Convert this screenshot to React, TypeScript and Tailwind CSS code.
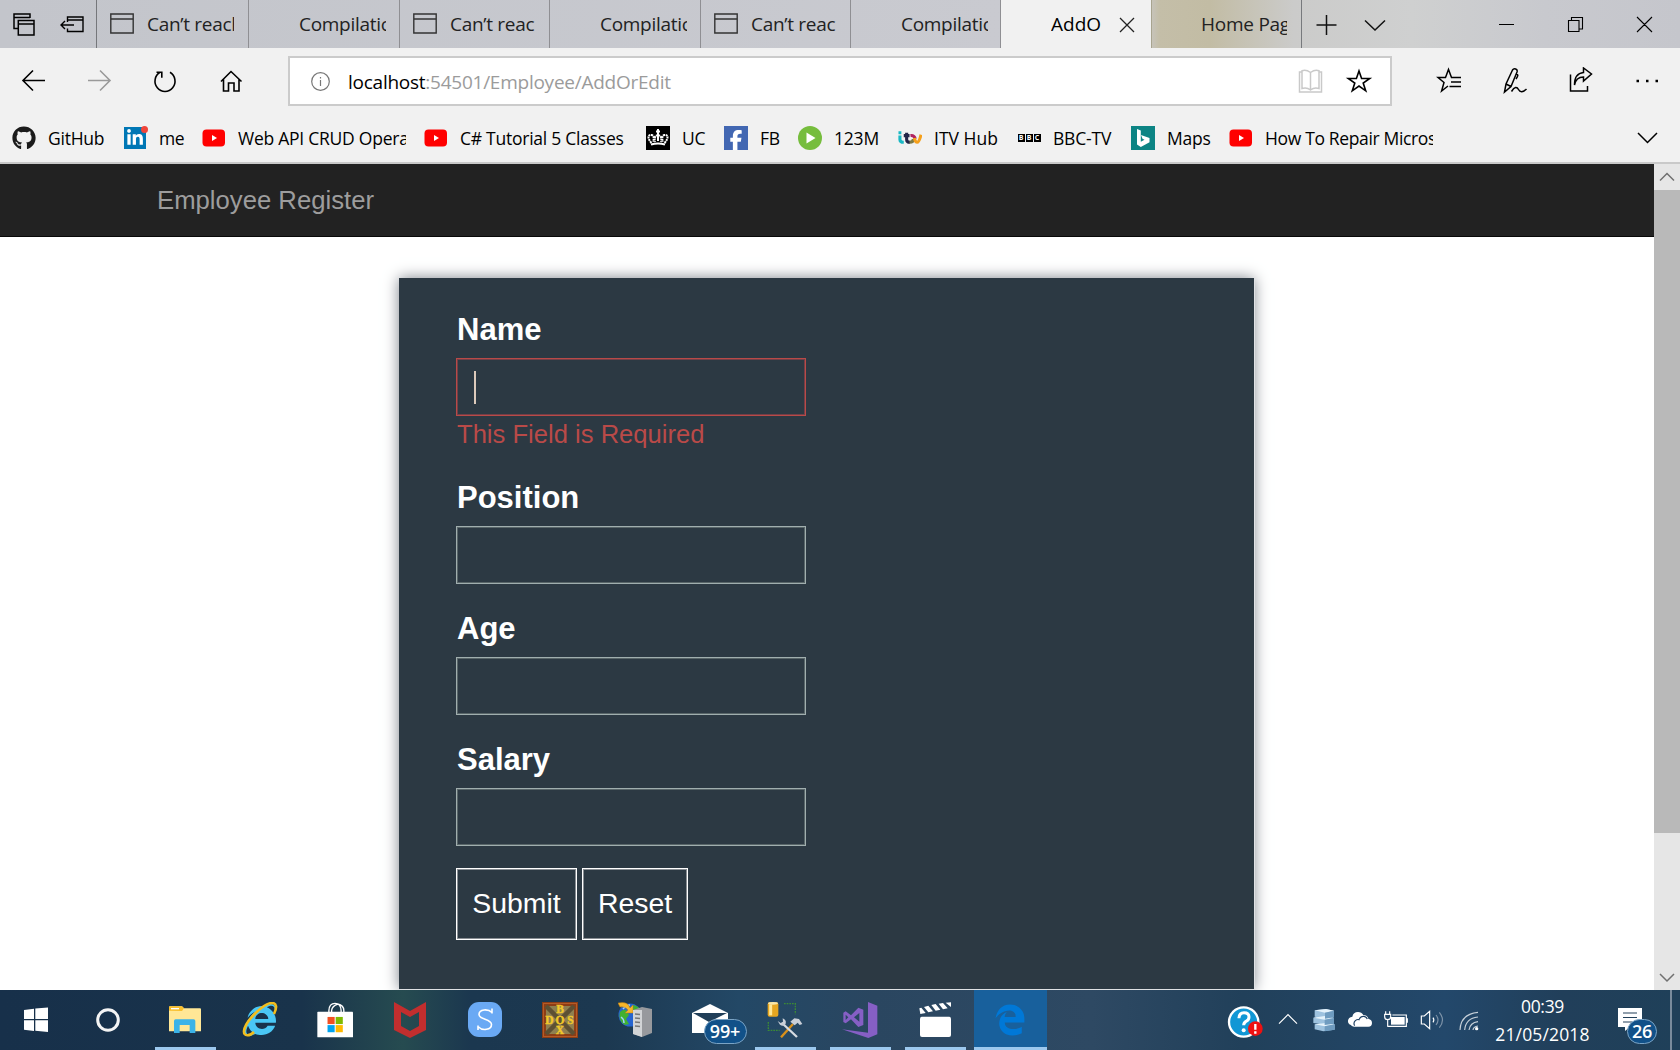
import type { ReactNode } from "react";
import { FaGithub, FaLinkedinIn, FaFacebookF, FaInternetExplorer, FaEdgeLegacy } from "react-icons/fa6";

const UI = "font-['Open_Sans','Noto_Sans',sans-serif]";

/* ---------- tab strip ---------- */

function WindowIcon() {
  return (
    <svg width="24" height="21" viewBox="0 0 24 21" fill="none" stroke="#333" strokeWidth="1.4" className="mb-[2px] shrink-0">
      <path d="M.8 1h22.400v19H.8zM.8 6h22.400" />
    </svg>
  );
}

function Tab({ title, icon, width }: { title: string; icon?: boolean; width: string }) {
  return (
    <div className={`flex h-12 shrink-0 items-center border-r border-[#8f8f93] ${width} pl-[13px] text-[#222]`}>
      <div className="w-[24px]">{icon && <WindowIcon />}</div>
      <div className="ml-[13px] w-[87px] overflow-hidden text-[19px] leading-[32px] tracking-[-0.3px] whitespace-nowrap">{title}</div>
    </div>
  );
}

function Tabs() {
  return (
    <div className="flex h-12 bg-[linear-gradient(90deg,#c3c5cb_0%,#c9cad0_60%,#c9cad0_68%,#c4bea8_69%,#c2bca4_72%,#cbcbca_77%,#cfd0d0_84%,#c8c9ce_92%,#c5c6cc_100%)]">
      <div className="flex w-[97px] items-center border-r border-[#75777b] pl-[13px]">
        <svg width="22" height="23" viewBox="0 0 22 23" fill="none" stroke="#000" strokeWidth="1.5">
          <path d="M5 15.5H1V1h16v4M1 4.500h16M5.300 7.500h15.700v14.500H5.300zM5.300 11h15.700" />
        </svg>
        <svg width="24" height="17" viewBox="0 0 24 17" fill="none" stroke="#000" strokeWidth="1.4" className="ml-[25px]">
          <path d="M7.500 6V1h15.500v14.500H7.500v-3M7.500 4H23M14 9H1M5 5L1 9l4 4" />
        </svg>
      </div>
      <Tab title="Can’t reach" icon width="w-[152px]" />
      <Tab title="Compilatic" width="w-[151px]" />
      <Tab title="Can’t reac" icon width="w-[150px]" />
      <Tab title="Compilatic" width="w-[151px]" />
      <Tab title="Can’t reac" icon width="w-[150px]" />
      <Tab title="Compilatic" width="w-[150px]" />
      <div className="flex h-12 w-[150px] shrink-0 items-center bg-[#f1f1f1] pl-[50px] text-black">
        <span className="w-[53px] overflow-hidden text-[19px] tracking-[0px]">AddO</span>
        <svg width="16" height="16" viewBox="0 0 16 16" stroke="#222" strokeWidth="1.300" className="mt-[2px] ml-[15px]">
          <path d="M1 1l14 14M15 1L1 15" />
        </svg>
      </div>
      <div className="flex h-12 w-[151px] shrink-0 items-center border-r border-l border-r-[#77797d] border-l-[#a8a48f] pl-[49px] text-[#222]">
        <span className="w-[86px] overflow-hidden text-[19px] leading-[32px] tracking-[-0.25px] whitespace-nowrap">Home Pag</span>
      </div>
      <svg width="72" height="48" viewBox="0 0 72 48" fill="none" stroke="#111" strokeWidth="1.500" className="ml-[14px]">
        <path d="M.5 25h20M10.500 15v20M49 20.500l10 9.500 10-9.500" />
      </svg>
      <svg width="160" height="48" viewBox="0 0 160 48" fill="none" stroke="#000" strokeWidth="1.100" className="ml-[110px]">
        <path d="M1 24.500h15M70.500 20.500h10.500v11h-10.500zM73.500 20.500v-3h11v11.500h-3.500M139 17l15 15M154 17l-15 15" />
      </svg>
    </div>
  );
}

/* ---------- address row ---------- */

function Toolbar() {
  return (
    <div className="flex h-[66px] items-center">
      <svg width="230" height="26" viewBox="0 0 230 26" fill="none" stroke="#000" strokeWidth="1.600" className="ml-[20px]">
        <path d="M25 12.500H3M13 2.500l-10 10 10 10" />
        <path d="M68 12.500h22M80 2.500l10 10-10 10" stroke="#9a9a9a" />
        <path d="M140 4.300A10 10.300 0 1 0 150 4.300M136.500 4.300h5.300v5.500" />
        <path d="M201 13.500L211 3.500 221.500 13.500M203.500 11.500V23h5v-8h5.500v8h5V11.500" />
      </svg>
      <div className="ml-[38px] flex h-[50px] w-[1104px] items-center border-2 border-[#cbcbcb] bg-white pl-[21px]">
        <svg width="19" height="19" viewBox="0 0 19 19" fill="none" stroke="#777" strokeWidth="1.200">
          <circle cx="9.500" cy="9.500" r="8.800" />
          <path d="M9.500 8v6M9.500 5v1.600" />
        </svg>
        <div className="mt-[2px] ml-[18px] w-[950px] text-[19px] tracking-[-0.25px] whitespace-nowrap text-[#9b9b9b]">
          <span className="text-black">localhost</span>:54501/Employee/AddOrEdit
        </div>
        <svg width="76" height="26" viewBox="0 0 76 26" fill="none" className="shrink-0">
          <path d="M12.500 4.500C9 2 6 2 4 2.800V20.500c3-1 6-.5 8.500 1.500 2.500-2 5.500-2.500 8.500-1.500V2.800c-2-.8-5-.8-8.500 1.700zM12.500 4.500V22M4 4H1.500v20h22V4H21" stroke="#c9c9c9" strokeWidth="1.500" />
          <path d="M60.500 4l2.600 7.500h8.100l-6.500 4.600 2.500 7.700-6.700-4.700-6.700 4.700 2.500-7.700-6.500-4.600h8.100z" transform="translate(.5 -1)" stroke="#000" strokeWidth="1.600" />
        </svg>
      </div>
      <svg width="228" height="28" viewBox="0 0 228 28" fill="none" stroke="#000" strokeWidth="1.500" className="ml-[44px]">
        <path d="M17.500 10.500h-2L12.500 2.500 9.500 10.500H2l6 5-2.400 8.500 6.400-5M15.500 10.500H25M15 15h10M13.500 19.500h11.500" />
        <path d="M68.500 25l1.500-8 6.500-14c1.500-2.500 5.500-1 4.500 2L75 19.500zM70 17l5 2.500M80.500 7c2 .5 1.500 2-.5 5M75.500 24.500c3-5 5.500-5 7-2s4.500 3 8-.5" />
        <path d="M134 7.500V24h17v-5M138 18c1-5.500 4-8 9-8V14l8-7-8-6v4.500c-6 .5-9 5-9 12.500z" transform="translate(.5 0)" />
        <path d="M200.500 14h2.500M210 14h2.500M219.500 14h2.500" strokeWidth="2.500" />
      </svg>
    </div>
  );
}

/* ---------- favourites bar ---------- */

function YouTube() {
  return (
    <svg width="24" height="18" viewBox="0 0 24 18">
      <rect x=".5" y=".5" width="22.500" height="17" rx="4" fill="#f00" />
      <path d="M10 6v6l5-3z" fill="#fff" />
    </svg>
  );
}

function Crown() {
  return (
    <svg width="24" height="24" viewBox="0 0 24 24" className="bg-black">
      <g fill="none" stroke="#fff" strokeWidth="2">
        <path d="M5.500 17C1 12 2 8.500 5.500 9c3 .5 2 4 2 7M18.500 17c4.500-5 3.500-8.500 0-8-3 .5-2 4-2 7M12 9c-4 1-3.500 4-3 7M12 9c4 1 3.500 4 3 7" strokeDasharray="2 .6" />
        <path d="M12 3v12M10 5.500h4" />
        <path d="M5 18.500q7-2 14 0" strokeWidth="2.200" />
      </g>
    </svg>
  );
}

function Fav({ label, width, clip, children, tracking = "tracking-[-0.35px]" }: { label: string; width: string; clip?: boolean; children: ReactNode; tracking?: string }) {
  return (
    <div className={`flex shrink-0 items-center ${width}`}>
      <div className="flex h-6 w-6 shrink-0 items-center justify-center">{children}</div>
      <span className={`ml-3 text-[17.500px] leading-[26px] whitespace-nowrap ${clip ? "w-[168px] overflow-hidden" : ""} ${tracking}`}>{label}</span>
    </div>
  );
}

function Favourites() {
  return (
    <div className="flex h-[48px] items-center pl-3 text-black">
      <Fav label="GitHub" width="w-[111px]" tracking="tracking-[-0.25px]"><FaGithub size={24} color="#1b1b1b" /></Fav>
      <Fav label="me" width="w-[79px]">
        <div className="relative flex h-[22px] w-[22px] items-center justify-center bg-[#0077b5]">
          <FaLinkedinIn size={18} color="#fff" />
          <span className="absolute -top-[1px] -right-[2px] h-[7px] w-[7px] rounded-full bg-[#f0453a]" />
        </div>
      </Fav>
      <Fav label="Web API CRUD Opera" width="w-[222px]" clip tracking="tracking-[-0.25px]"><YouTube /></Fav>
      <Fav label="C# Tutorial 5 Classes" width="w-[222px]" tracking="tracking-[-0.25px]"><YouTube /></Fav>
      <Fav label="UC" width="w-[78px]"><Crown /></Fav>
      <Fav label="FB" width="w-[74px]">
        <div className="flex h-6 w-6 items-end justify-end bg-[#4267b2] pr-[2px]"><FaFacebookF size={20} color="#fff" /></div>
      </Fav>
      <Fav label="123M" width="w-[100px]" tracking="tracking-[-0.2px]">
        <svg width="24" height="24" viewBox="0 0 24 24"><circle cx="12" cy="12" r="12" fill="#76bd3d" /><path d="M8.500 6.500v11l9-5.500z" fill="#fff" /></svg>
      </Fav>
      <Fav label="ITV Hub" width="w-[119px]" tracking="tracking-[0px]">
        <svg width="25" height="14" viewBox="0 0 25 14" fill="none" strokeWidth="3.200">
          <path d="M2 4.500v4q0 3 4 3M.5 1.500h3" stroke="#19b8c4" />
          <path d="M6 4.500h6M9 1.500v7q0 3 3.500 3" stroke="#222447" />
          <path d="M12 11.500q4 0 4-3.500" stroke="#7d7a45" />
          <path d="M13 4.500q4-.5 5 3.500" stroke="#b12361" />
          <path d="M17 7q1 4.500 3 4.500 2 0 4-8" stroke="#f6a01b" />
        </svg>
      </Fav>
      <Fav label="BBC-TV" width="w-[114px]" tracking="tracking-[-0.2px]">
        <div className="flex gap-px text-[7px] leading-[8px] font-bold text-white">
          <span className="w-[7px] bg-black text-center">B</span><span className="w-[7px] bg-black text-center">B</span><span className="w-[7px] bg-black text-center">C</span>
        </div>
      </Fav>
      <Fav label="Maps" width="w-[98px]" tracking="tracking-[-0.2px]">
        <svg width="24" height="24" viewBox="0 0 24 24" className="bg-[#0c8484]"><path d="M6 3l3.800 1.400v11.400l3.700-2-2-1-1.500-3.700 8.500 3v4.200L9.800 21 6 18.500z" fill="#fff" /></svg>
      </Fav>
      <Fav label="How To Repair Micros" width="w-[408px]" clip><YouTube /></Fav>
      <svg width="21" height="12" viewBox="0 0 21 12" fill="none" stroke="#000" strokeWidth="1.500"><path d="M1 1l9.500 9.500L20 1" /></svg>
    </div>
  );
}

/* ---------- page ---------- */

function Field({ label, error }: { label: string; error?: string }) {
  return (
    <div className="mb-[26px]">
      <div className="mb-[10px] h-[37px] pl-px text-[31px] leading-[38px] font-bold text-white">{label}</div>
      <div className={`flex h-[58px] w-[350px] items-center border pl-[17px] ${error ? "border-[#b94a48] shadow-[inset_0_0_0_1px_#733f47]" : "border-[#a0aeae] shadow-[inset_0_0_0_1px_#596669]"}`}>
        {error && <span className="h-[33px] w-[2px] bg-[#dccabb]" />}
      </div>
      {error && <div className="h-[37px] pl-px text-[25.600px] leading-[37px] text-[#b94a48]">{error}</div>}
    </div>
  );
}

function Button({ label, width }: { label: string; width: string }) {
  return (
    <button className={`flex h-[72px] items-center justify-center border border-white pb-px text-[28.400px] text-white shadow-[inset_0_0_0_1px_#8a8f94] ${width}`}>
      {label}
    </button>
  );
}

function Page() {
  return (
    <div className="flex h-[826px] bg-white font-['Liberation_Sans',Arial,sans-serif]">
      <div className="flex w-[1654px] flex-col overflow-hidden">
        <div className="flex h-[73px] shrink-0 items-center border-b border-[#080808] bg-[#222] pl-[157px] text-[25.700px] text-[#9d9d9d]">
          Employee Register
        </div>
        <div className="mt-[41px] ml-[399px] h-[711px] w-[855px] shrink-0 bg-[#2c3943] pt-[33px] pl-[57px] shadow-[1px_1px_0_0_#dfe1e4,0_0_14px_#7c828a]">
          <Field label="Name" error="This Field is Required" />
          <Field label="Position" />
          <Field label="Age" />
          <Field label="Salary" />
          <div className="-mt-[4px] flex gap-[5px]">
            <Button label="Submit" width="w-[121px]" />
            <Button label="Reset" width="w-[106px]" />
          </div>
        </div>
      </div>
      <div className="flex w-[26px] flex-col items-center bg-[#e6e6e6]">
        <svg width="26" height="26" viewBox="0 0 26 26" fill="none" stroke="#707070" strokeWidth="1.500"><path d="M6 16.500l7-7 7 7" /></svg>
        <div className="h-[643px] w-full bg-[#b9b9b9]" />
        <svg width="26" height="26" viewBox="0 0 26 26" fill="none" stroke="#707070" strokeWidth="1.500" className="mt-auto"><path d="M6 10l7 7 7-7" /></svg>
      </div>
    </div>
  );
}

/* ---------- taskbar ---------- */

function Task({ running, children }: { running?: boolean; children: ReactNode }) {
  return (
    <div className="flex h-[60px] w-[75px] flex-col items-center">
      <div className="flex h-[57px] items-center justify-center pt-[2px] pr-[2px]">{children}</div>
      {running && <div className="h-[3px] w-[61px] bg-[#9cc8ee]" />}
    </div>
  );
}

function Folder() {
  return (
    <svg width="32" height="27" viewBox="507 80 96 81">
      <path d="M507 84q0-3 3-3h36l6 6h48q3 0 3 3v66h-96z" fill="#ffe796" />
      <path d="M507 94V84q0-3 3-3h36l6 6-6 8z" fill="#f9bf2c" />
      <path d="M513 88h24" stroke="#fff" strokeWidth="4" />
      <path d="M522 161v-36q0-5 5-5h54q5 0 5 5v36h-17v-24h-30v24z" fill="#3bb3e8" />
    </svg>
  );
}

function Explorer() {
  return (
    <div className="relative flex h-[36px] w-[36px] items-center justify-center">
      <FaInternetExplorer size={32} color="#4ac7f5" />
      <svg width="36" height="36" viewBox="0 0 36 36" fill="none" className="absolute inset-0">
        <path d="M32 12c3-6 3-11-2-11C22 1 3 19 2 29c-.5 6 6 5 10 1" stroke="#f2bd1d" strokeWidth="2.600" />
      </svg>
    </div>
  );
}

function Store() {
  return (
    <svg width="36" height="36" viewBox="950 64 106 106">
      <path d="M985 95v-6q1-21 18-21t18 21v6M993 95v-6q1-13 18-19 18 4 18 19v6" fill="none" stroke="#fff" strokeWidth="4" />
      <rect x="951" y="93" width="105" height="75" rx="2" fill="#fff" />
      <path d="M981 108h21v21h-21z" fill="#f25022" /><path d="M1005 108h21v21h-21z" fill="#7fba00" />
      <path d="M981 132h21v21h-21z" fill="#00a4ef" /><path d="M1005 132h21v21h-21z" fill="#ffb900" />
    </svg>
  );
}

function Shield() {
  return (
    <svg width="32" height="36" viewBox="0 0 32 36"><path d="M0 0l16 9 16-9v28l-16 8-16-8zM7 10v14l9 5 9-5V10l-9 5z" fill="#c22e2e" fillRule="evenodd" /></svg>
  );
}

function Swirl() {
  return (
    <svg width="34" height="35" viewBox="0 0 34 35">
      <rect width="34" height="35" rx="11" fill="#6aa9f4" />
      <path d="M24 10.500c-4-4-13-3.500-13 2 0 5.500 12.500 4 12.500 10 0 5.500-9 6.500-13 2.500M24 6.500v5M10 28v-4.500" fill="none" stroke="#fff" strokeWidth="1.600" />
    </svg>
  );
}

function DosBox() {
  return (
    <svg width="36" height="36" viewBox="0 0 36 36" className="font-['Liberation_Serif',serif]">
      <rect width="36" height="36" fill="#8c3d16" />
      <rect x="1.500" y="1.500" width="33" height="33" fill="none" stroke="#b55b27" />
      <rect x="4" y="4" width="28" height="28" fill="#8f8050" />
      <path d="M4 4l28 28M32 4L4 32" stroke="#5d5033" strokeWidth="4.500" />
      <g fill="#f2c829" stroke="#f2c829" strokeWidth=".4" fontSize="11.500" fontWeight="bold" textAnchor="middle">
        <text x="18" y="11">B</text><text x="7.500" y="21.500">D</text><text x="18" y="21.500">O</text><text x="28.500" y="21.500">S</text><text x="18" y="32">X</text>
      </g>
    </svg>
  );
}

function GlobeServer() {
  return (
    <svg width="34" height="36" viewBox="0 0 34 36">
      <circle cx="12" cy="13" r="11.500" fill="#2664cf" />
      <path d="M2 10q3-3 6-2l3 5-3 4 3 5-4 1Q0 19 2 10zM15 3q6 1 8 6l-4 4-4-2z" fill="#41b030" />
      <path d="M5 7q3-4 7-4M3 15q3 2 3 6" stroke="#9fd0ff" strokeWidth="1.500" fill="none" />
      <path d="M0 1q10-2 12 5l3-3v8H7l3-3Q7 4 2 5z" fill="#f6b52b" stroke="#b97a10" strokeWidth=".5" />
      <path d="M15 8l9-3 10 2v24l-10 4-9-3z" fill="#97999d" />
      <path d="M15 8l9 0v27l-9-3z" fill="#d2d4d6" />
      <path d="M17 12l5 .5M17 16l5 .5M17 20l5 .5M17 24l5 .5" stroke="#777" strokeWidth="1.500" />
    </svg>
  );
}

function Mail() {
  return (
    <div className="relative h-[36px] w-[36px]">
      <svg width="36" height="36" viewBox="0 0 36 36">
        <path d="M0 11L18 2l18 9v20H0z" fill="#fff" /><path d="M1 11h34l-18 9z" fill="#203e58" />
      </svg>
      <span className="absolute top-[17px] left-[12px] flex h-[25px] w-[43px] items-center justify-center rounded-full border border-[#7ba4c5] bg-[#115189] text-[18px] font-semibold tracking-[-0.2px] text-white">99+</span>
    </div>
  );
}

function SqlTools() {
  return (
    <svg width="36" height="36" viewBox="82 66 108 108">
      <path d="M133 71h34v32M86 126v25h34" fill="none" stroke="#3c8b34" strokeWidth="4" strokeDasharray="5 3" />
      <rect x="84" y="67" width="32" height="43" rx="6" fill="#e6a620" /><path d="M93 73v33" stroke="#ffe796" strokeWidth="9" /><ellipse cx="100" cy="70" rx="15" ry="4" fill="#f8e6a8" />
      <path d="M124 172l36-40" stroke="#d8901c" strokeWidth="7" />
      <path d="M127 129l45 42" stroke="#d6dbe2" strokeWidth="7" />
      <path d="M114 123l9 6 7-4-1-10q12 5 9 16-7 10-17 3zM152 125l12-10 14 2 10 15-8 3-6-7-9 8z" fill="#c9cfd8" />
    </svg>
  );
}

function VisualStudio() {
  return (
    <svg width="36" height="36" viewBox="308 66 108 108" fill="#865fc5">
      <path d="M386 66l28 11v86l-27 11-79-26 78 10z" />
      <path fillRule="evenodd" d="M312 98l7-4 16 12 22-23 15 6v46l-15 6-22-23-16 12-7-4zM319 104v16l8-8zM360 99l-16 13 16 13z" />
    </svg>
  );
}

function Clapper() {
  return (
    <svg width="32" height="36" viewBox="534 66 96 108" fill="#fff">
      <rect x="537" y="110" width="93" height="61" rx="6" />
      <path d="M535 85l6-2 13 16-16 3zM549 81l13-4 14 17-14 3zM571 75l13-3 14 17-14 3zM593 71l13-2 14 16-14 3zM614 68l16-1v14z" />
    </svg>
  );
}

function Tray() {
  return (
    <svg width="256" height="60" viewBox="75 30 768 180" fill="none" stroke="#fff" strokeWidth="3.500">
      <circle cx="131" cy="126" r="44" fill="#1197d5" strokeWidth="7" />
      <path d="M117 115q0-17 15-17t15 13q0 9-9 13-7 4-7 12" strokeWidth="9" />
      <circle cx="131" cy="151" r="6" fill="#fff" stroke="none" />
      <circle cx="166" cy="146" r="22" fill="#ee1111" stroke="none" />
      <path d="M166 132v17M166 154v7" strokeWidth="7" />
      <path d="M237 131l27-27 27 27" />
      <g stroke="none">
        <path d="M344 91l34-4 24 5v20l-24 4-34-6zM340 113l34-5 28 6v17l-24 4-38-6zM344 133l34-4 26 4v16l-34 5-26-6z" fill="#9dc2df" />
        <path d="M344 91l34-4 24 5-27 6zM340 113l34-5 28 6-28 5zM344 133l34-4 26 4-30 6z" fill="#e4f2fb" />
        <path d="M375 98l27-6v20l-27 4zM374 119l28-5v17l-28 4zM374 139l30-6v16l-30 5z" fill="#6f9cc0" />
        <path d="M453 135q-10-3-9-13 1-11 13-12 3-14 17-14 11 0 16 9 12 0 15 11 11 3 11 13 0 11-11 11h-43q-9-1-9-5z" fill="#fff" />
      </g>
      <path d="M464 137q-5-8 2-15 6-5 11-3 4-11 15-10 7 1 10 8" stroke="#214264" />
      <path d="M557 94v8M569 94v8M554 103h18v7q0 9-9 9t-9-9zM563 119v21M577 105h42v34h-56M622 115v13" />
      <rect x="573" y="111" width="41" height="23" fill="#fff" stroke="none" />
      <path d="M664 108h9l16-14v52l-16-14h-9z" />
      <path d="M699 113q5 7 0 14" /><path d="M708 105q12 15 0 30M718 97q19 23 0 46" stroke="#7e93a8" />
      <path d="M780 150q2-48 54-53M794 150q3-35 40-39M807 150q3-22 27-25M819 150q1-10 15-12" stroke="#c6d0d9" />
      <circle cx="830" cy="146" r="5" fill="#fff" stroke="none" />
    </svg>
  );
}

function Taskbar() {
  return (
    <div className="flex h-[60px] bg-[linear-gradient(90deg,#17304a_0%,#19334b_18%,#264b50_24%,#1b374f_28%,#1c3850_36%,#234866_44%,#2a4660_52%,#2e4963_65%,#21405a_74%,#23486b_86%,#213f5a_93%,#1f4059_100%)]">
      <svg width="148" height="60" viewBox="0 0 148 60">
        <path d="M24 20l10-1.300V29H24zM35.300 18.500L48 17.500V29H35.300zM24 30.300h10V41l-10-1.300zM35.300 30.300H48V42l-12.700-1.300z" fill="#fff" />
        <circle cx="108" cy="30" r="10.300" fill="none" stroke="#f4f4f4" strokeWidth="3" />
      </svg>
      <Task running><Folder /></Task>
      <Task><Explorer /></Task>
      <Task><Store /></Task>
      <Task><Shield /></Task>
      <Task><Swirl /></Task>
      <Task><DosBox /></Task>
      <Task><GlobeServer /></Task>
      <Task><Mail /></Task>
      <Task running><SqlTools /></Task>
      <Task running><VisualStudio /></Task>
      <Task running><Clapper /></Task>
      <div className="ml-px flex w-[73px] flex-col items-center border-b-[3px] border-[#9cc8ee] bg-[#18609c] pt-[14px] pr-[2px]">
        <FaEdgeLegacy size={32} color="#0078d7" />
      </div>
      <div className="ml-[178px]"><Tray /></div>
      <div className="ml-[6px] flex w-[111px] flex-col items-center pt-[2px] text-[17.500px] leading-[28px] text-white">
        <span className="tracking-[-0.3px]">00:39</span>
        <span className="tracking-[0.15px]">21/05/2018</span>
      </div>
      <div className="relative ml-[20px] w-[54px] border-r-2 border-[#788b9c]">
        <svg width="24" height="24" viewBox="0 0 24 24" className="mt-[18px]">
          <path d="M0 0h24v19H12l-5 4v-4H0z" fill="#fff" /><path d="M5 5h14M5 9.500h14M5 14h9" stroke="#24415a" strokeWidth="1.200" />
        </svg>
        <span className="absolute top-[29px] left-[9px] flex h-[25px] w-[30px] items-center justify-center rounded-full border border-[#7ba4c5] bg-[#115189] text-[18px] font-semibold tracking-[-0.3px] text-white">26</span>
      </div>
    </div>
  );
}

export default function App() {
  return (
    <div className={`flex h-[1050px] w-[1680px] flex-col overflow-hidden ${UI}`}>
      <Tabs />
      <div className="flex h-[116px] flex-col border-b-2 border-[#c9c9c9] bg-[#f1f1f1]">
        <Toolbar />
        <Favourites />
      </div>
      <Page />
      <Taskbar />
    </div>
  );
}
